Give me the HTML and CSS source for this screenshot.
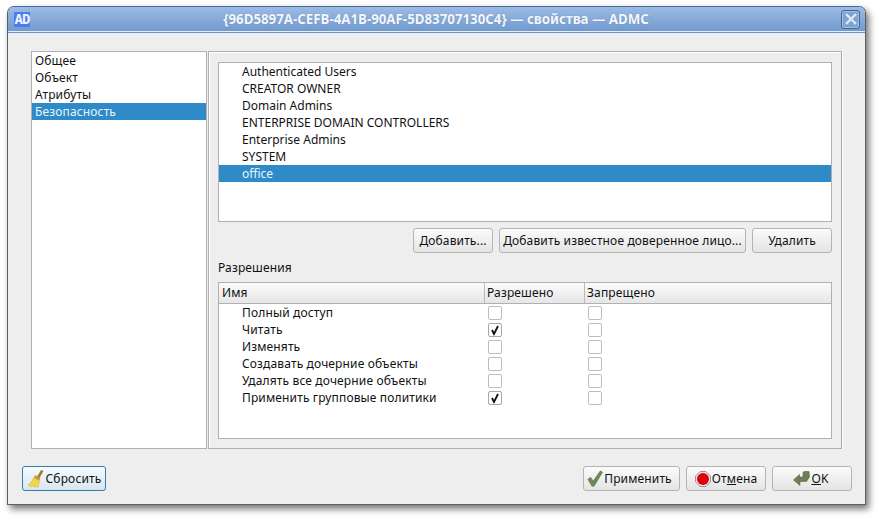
FILE: index.html
```html
<!DOCTYPE html>
<html lang="ru">
<head>
<meta charset="utf-8">
<title>ADMC</title>
<link rel="stylesheet" href="styles.css">
</head>
<body>
<div class="window">
  <header class="titlebar">
    <div class="app-icon">AD</div>
    <div class="title">{96D5897A-CEFB-4A1B-90AF-5D83707130C4} — свойства — ADMC</div>
    <div class="close"><svg width="14" height="14" viewBox="0 0 14 14"><path d="M2 2L12 12M12 2L2 12" stroke="#dfe9f7" stroke-width="2.4"/></svg></div>
  </header>
  <div class="content">
    <div class="main">
      <ul class="nav">
        <li>Общее</li>
        <li>Объект</li>
        <li>Атрибуты</li>
        <li class="selected">Безопасность</li>
      </ul>
      <div class="pane">
        <ul class="trustees">
          <li>Authenticated Users</li>
          <li>CREATOR OWNER</li>
          <li>Domain Admins</li>
          <li>ENTERPRISE DOMAIN CONTROLLERS</li>
          <li>Enterprise Admins</li>
          <li>SYSTEM</li>
          <li class="selected">office</li>
        </ul>
        <div class="actions">
          <button class="btn w80">Добавить...</button>
          <button class="btn w247">Добавить известное доверенное лицо...</button>
          <button class="btn w80">Удалить</button>
        </div>
        <div class="section-label">Разрешения</div>
        <div class="table">
          <div class="thead">
            <div class="th c1">Имя</div>
            <div class="th c2">Разрешено</div>
            <div class="th c3">Запрещено</div>
          </div>
          <div class="tr"><div class="c1 name">Полный доступ</div><div class="c2"><span class="cb"></span></div><div class="c3"><span class="cb"></span></div></div>
          <div class="tr"><div class="c1 name">Читать</div><div class="c2"><span class="cb on"><svg width="12" height="12" viewBox="0 0 12 12"><path d="M3 6L5 10L9 2" fill="none" stroke="#111" stroke-width="1.8"/></svg></span></div><div class="c3"><span class="cb"></span></div></div>
          <div class="tr"><div class="c1 name">Изменять</div><div class="c2"><span class="cb"></span></div><div class="c3"><span class="cb"></span></div></div>
          <div class="tr"><div class="c1 name">Создавать дочерние объекты</div><div class="c2"><span class="cb"></span></div><div class="c3"><span class="cb"></span></div></div>
          <div class="tr"><div class="c1 name">Удалять все дочерние объекты</div><div class="c2"><span class="cb"></span></div><div class="c3"><span class="cb"></span></div></div>
          <div class="tr"><div class="c1 name">Применить групповые политики</div><div class="c2"><span class="cb on"><svg width="12" height="12" viewBox="0 0 12 12"><path d="M3 6L5 10L9 2" fill="none" stroke="#111" stroke-width="1.8"/></svg></span></div><div class="c3"><span class="cb"></span></div></div>
        </div>
      </div>
    </div>
    <div class="footer">
      <button class="btn reset">
        <svg width="18" height="20" viewBox="0 0 18 20"><path d="M10 8L14 1L16.5 2L12.5 9Z" fill="#a9772f"/><path d="M8.5 6L13.5 9L12 12L6.5 9Z" fill="#c79a3d"/><path d="M6.5 8.5L12.5 12L11 18.5L8.5 17L7.5 18.5L5.5 17L4 18L2.5 16.5L1 16C3.5 14.5 5.5 11.5 6.5 8.5Z" fill="#f0d64c" stroke="#d5b02c" stroke-width=".5"/></svg>
        <span>Сбросить</span>
      </button>
      <div class="spacer"></div>
      <button class="btn apply">
        <svg width="16" height="17" viewBox="0 0 18 20" preserveAspectRatio="none"><path d="M1 11L4 8.5L7 13L15 1L17.5 2.5L8 19H5.5Z" fill="#6c8a55" stroke="#55703f" stroke-width=".6"/></svg>
        <span>Применить</span>
      </button>
      <button class="btn cancel">
        <svg width="16" height="16" viewBox="0 0 16 16"><path d="M5 .6H11L15.4 5V11L11 15.4H5L.6 11V5Z" fill="#ececec" stroke="#9b8c8c"/><circle cx="8" cy="8" r="6" fill="#e1000f"/></svg>
        <span>От<u>м</u>ена</span>
      </button>
      <button class="btn ok">
        <svg width="17" height="17" viewBox="0 0 17 17"><path d="M0.5 10L6.5 4.5V7H10V3Q10 1.5 11.5 1.5H16L16.5 7L13.5 11.5H7V15.5Z" fill="#6e7f55" stroke="#59683f" stroke-width=".6"/></svg>
        <span><u>O</u>K</span>
      </button>
    </div>
  </div>
</div>
</body>
</html>
```

FILE: styles.css
```css
* { box-sizing: border-box; }
html, body { margin: 0; padding: 0; background: #fff; }
body {
  width: 880px;
  height: 520px;
  overflow: hidden;
  padding: 6px 0 0 7px;
  font-family: "Noto Sans", sans-serif;
  font-size: 12px;
  line-height: 17px;
  letter-spacing: .14px;
  color: #111;
}
.window {
  width: 859px;
  height: 499px;
  background: #eeeeee;
  border: 1px solid #5b5f66;
  border-top-color: #4a6a9c;
  border-radius: 7px 7px 0 0;
  box-shadow: 3px 4px 7px rgba(0, 0, 0, .55);
  display: flex;
  flex-direction: column;
}
.titlebar {
  height: 25px;
  flex: none;
  display: flex;
  align-items: center;
  padding: 0 1px 0 6px;
  background: linear-gradient(#9cbbe4, #719ace);
  border-bottom: 1px solid #e4edf9;
  border-radius: 6px 6px 0 0;
  box-shadow: 0 1px 0 #6b93c8;
}
.app-icon {
  width: 16px;
  height: 15px;
  background: #4d7cf2;
  color: #f1f5ff;
  font: bold 14px/15px "DejaVu Sans Mono", monospace;
  letter-spacing: -1px;
  text-align: center;
}
.title {
  flex: 1;
  text-align: center;
  font-weight: 700;
  color: #f4f7fc;
  font-size: 13.3px;
  letter-spacing: 0;
  padding-left: 1px;
  text-shadow: 0 0 1px #5b7fb0;
}
.close {
  width: 19px;
  height: 19px;
  margin-right: 4px;
  border: 1px solid #47668f;
  border-radius: 3px;
  background: #7ca3d4;
  box-shadow: inset 0 0 0 1px #a2bfe4;
  display: flex;
  align-items: center;
  justify-content: center;
}
.content {
  flex: 1;
  display: flex;
  flex-direction: column;
  padding: 19px 13px 13px 14px;
}
.main {
  display: flex;
  height: 398px;
  flex: none;
  margin: 0 10px 0 9px;
}
ul { list-style: none; margin: 0; }
.nav {
  width: 176px;
  padding: 0;
  background: #fff;
  border: 1px solid #b0b0b0;
  flex: none;
}
.nav li { height: 17px; padding-left: 3px; }
li.selected { background: #2e8bc8; color: #eaf4fb; }
.pane {
  flex: 1;
  border: 1px solid #b0b0b0;
  border-right-color: #a9a9a9;
  box-shadow: inset 1px 1px 0 #fff, 1px 0 0 #fff;
  margin-left: 1px;
  padding: 10px 9px 9px 9px;
  display: flex;
  flex-direction: column;
}
.trustees {
  height: 160px;
  flex: none;
  padding: 0;
  background: #fff;
  border: 1px solid #b0b0b0;
  letter-spacing: 0;
}
.trustees li { height: 17px; padding-left: 23px; }
.actions {
  display: flex;
  justify-content: flex-end;
  gap: 6px;
  margin-top: 6px;
}
.btn {
  height: 25px;
  padding: 0;
  border: 1px solid #b4b4b4;
  border-radius: 3px;
  background: linear-gradient(#fbfbfb, #e4e4e4);
  font: inherit;
  letter-spacing: inherit;
  color: inherit;
  display: flex;
  align-items: center;
  justify-content: center;
  gap: 1px;
}
.w80 { width: 80px; }
.w247 { width: 247px; }
.section-label { margin-top: 6px; height: 23px; line-height: 17px; }
.table {
  flex: 1;
  background: #fff;
  border: 1px solid #b0b0b0;
}
.thead {
  display: flex;
  height: 21px;
  background: linear-gradient(#fafafa, #e6e6e6);
  border-bottom: 1px solid #b0b0b0;
}
.th { line-height: 20px; padding-left: 3px; border-right: 1px solid #b9b9b9; }
.th.c2, .th.c3 { padding-left: 2px; }
.th.c3 { border-right: 0; }
.tr { display: flex; height: 17px; }
.c1 { width: 266px; flex: none; }
.c2 { width: 100px; flex: none; }
.c3 { flex: 1; }
.name { padding-left: 23px; }
.tr .c2, .tr .c3 { padding-left: 3px; display: flex; align-items: center; }
.cb {
  width: 14px;
  height: 14px;
  border: 1px solid #bdbdbd;
  border-radius: 2px;
  background: #fff;
  display: block;
}
.cb svg { display: block; margin: 0; }
.cb.on { border-color: #a8a8a8; }
.footer {
  display: flex;
  align-items: center;
  margin-top: 17px;
  gap: 6px;
}
.spacer { flex: 1; }
.reset {
  width: 84px;
  border-color: #2f7fb5;
  background: linear-gradient(#f6fafd, #d9e6f0);
}
.apply { width: 97px; padding-right: 4px; }
.cancel { width: 80px; }
.ok { width: 80px; padding-right: 2px; }
```
